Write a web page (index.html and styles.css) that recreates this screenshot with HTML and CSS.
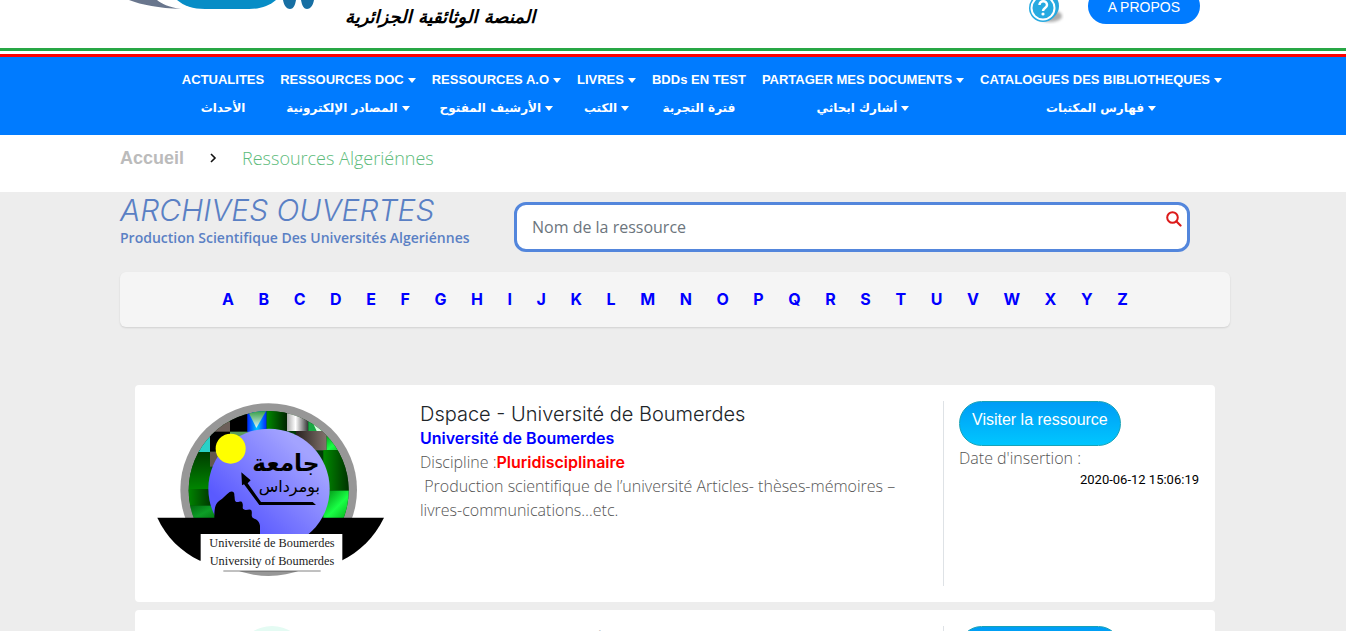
FILE: index.html
```html
<!DOCTYPE html>
<html lang="fr">
<head>
<meta charset="utf-8">
<meta name="viewport" content="width=device-width, initial-scale=1">
<title>Archives ouvertes</title>
<link rel="stylesheet" href="styles.css">
</head>
<body>
<header class="top">
  <div class="container top-row">
    <div class="brand">
      <svg class="brand-mark" width="205" height="40" viewBox="0 0 205 40" aria-hidden="true">
        <path d="M9 0h28c5 4 11 7 24 9C39 8 22 5 9 0z" fill="#69768d"/>
        <path d="M57 0h99c-7 6-16 9-27 9H85C73 9 64 6 57 0z" fill="#078dc6"/>
        <path d="M163 0h13c-1 6-3 9-6 9s-6-3-7-9zM181 0h13c-1 6-4 9-7 9s-5-3-6-9z" fill="#176fa3"/>
      </svg>
      <span class="brand-name" lang="ar" dir="rtl">المنصة الوثائقية الجزائرية</span>
    </div>
    <div class="top-actions">
      <a class="help" href="#" aria-label="Aide">
        <svg width="36" height="40" viewBox="0 0 36 40">
          <defs><filter id="soft" x="-30%" y="-30%" width="160%" height="160%"><feGaussianBlur stdDeviation="1.5"/></filter></defs>
          <ellipse cx="22" cy="32" rx="12" ry="6" fill="#888" opacity=".7" filter="url(#soft)"/>
          <circle cx="17" cy="22" r="14" fill="#2aa5dc"/>
          <circle cx="15" cy="24" r="14" fill="#27aae1"/>
          <circle cx="15" cy="24" r="11.500" fill="none" stroke="#fff" stroke-width="2"/>
          <path d="M11.500 21c0-5 7.500-5 7.500 0 0 3-4 3-4 6" fill="none" stroke="#fff" stroke-width="2.500"/>
          <circle cx="15" cy="30" r="1.600" fill="#fff"/>
        </svg>
      </a>
      <a class="about" href="#">A PROPOS</a>
    </div>
  </div>
</header>
<div class="flag"></div>
<nav class="menu">
  <ul class="container menu-list">
    <li><a href="#"><span>ACTUALITES</span><span class="ar" lang="ar">الأحداث</span></a></li>
    <li><a href="#"><span class="drop">RESSOURCES DOC</span><span class="ar drop"><bdi lang="ar">المصادر الإلكترونية</bdi></span></a></li>
    <li><a href="#"><span class="drop">RESSOURCES A.O</span><span class="ar drop"><bdi lang="ar">الأرشيف المفتوح</bdi></span></a></li>
    <li><a href="#"><span class="drop">LIVRES</span><span class="ar drop"><bdi lang="ar">الكتب</bdi></span></a></li>
    <li><a href="#"><span>BDDs EN TEST</span><span class="ar" lang="ar">فترة التجربة</span></a></li>
    <li><a href="#"><span class="drop">PARTAGER MES DOCUMENTS</span><span class="ar drop"><bdi lang="ar">أشارك ابحاثي</bdi></span></a></li>
    <li><a href="#"><span class="drop">CATALOGUES DES BIBLIOTHEQUES</span><span class="ar drop"><bdi lang="ar">فهارس المكتبات</bdi></span></a></li>
  </ul>
</nav>
<div class="container crumbs">
  <a class="crumb-home" href="#">Accueil</a>
  <svg width="8" height="10" viewBox="0 0 8 10" aria-hidden="true"><path d="M2 1l4 4-4 4" fill="none" stroke="#111" stroke-width="1.600"/></svg>
  <a class="crumb-page" href="#">Ressources Algeriénnes</a>
</div>
<main class="content">
  <div class="container">
    <div class="intro">
      <div>
        <h1>ARCHIVES OUVERTES</h1>
        <p class="subtitle">Production Scientifique Des Universités Algeriénnes</p>
      </div>
      <form class="search">
        <input type="text" aria-label="Nom de la ressource" placeholder="Nom de la ressource">
        <button type="button" aria-label="Rechercher">
          <svg width="16" height="16" viewBox="0 0 16 16"><circle cx="6.500" cy="6.500" r="5.300" fill="none" stroke="#dc1a1a" stroke-width="2"/><path d="M10.500 10.500l4 4" stroke="#dc1a1a" stroke-width="2.200" stroke-linecap="round"/></svg>
        </button>
      </form>
    </div>
    <nav class="letters" aria-label="Index alphabétique">
      <div class="letters-row">
        <a href="#">A</a><a href="#">B</a><a href="#">C</a><a href="#">D</a><a href="#">E</a><a href="#">F</a><a href="#">G</a><a href="#">H</a><a href="#">I</a><a href="#">J</a><a href="#">K</a><a href="#">L</a><a href="#">M</a><a href="#">N</a><a href="#">O</a><a href="#">P</a><a href="#">Q</a><a href="#">R</a><a href="#">S</a><a href="#">T</a><a href="#">U</a><a href="#">V</a><a href="#">W</a><a href="#">X</a><a href="#">Y</a><a href="#">Z</a>
      </div>
    </nav>
    <div class="cards">
      <article class="card">
        <div class="card-logo">
          <svg width="240" height="184" viewBox="0 18 720 552" role="img" aria-label="Université de Boumerdes">
            <defs>
              <linearGradient id="disc" x1="0" y1="1" x2="1" y2="0"><stop offset=".25" stop-color="#5a5aff"/><stop offset=".8" stop-color="#a3a3ff"/></linearGradient>
              <linearGradient id="g1" x1="0" y1="0" x2="1" y2="0"><stop offset="0" stop-color="#008a00"/><stop offset="1" stop-color="#002400"/></linearGradient>
              <linearGradient id="g2" x1="0" y1="0" x2="0" y2="1"><stop offset="0" stop-color="#003800"/><stop offset="1" stop-color="#008500"/></linearGradient>
              <linearGradient id="g3" x1="0" y1="0" x2="1" y2="1"><stop offset="0" stop-color="#008a10"/><stop offset=".5" stop-color="#19ff45"/><stop offset="1" stop-color="#009a10"/></linearGradient>
              <linearGradient id="w" x1="0" y1="0" x2="1" y2="0"><stop offset="0" stop-color="#aaa"/><stop offset=".4" stop-color="#fff"/><stop offset="1" stop-color="#333"/></linearGradient>
              <linearGradient id="b" x1="0" y1="0" x2="1" y2="0"><stop offset="0" stop-color="#0020ff"/><stop offset=".5" stop-color="#00c8ff"/><stop offset="1" stop-color="#0020ff"/></linearGradient>
              <linearGradient id="br" x1="0" y1="0" x2="1" y2="0"><stop offset="0" stop-color="#28221f"/><stop offset="1" stop-color="#82736d"/></linearGradient>
              <linearGradient id="tri" x1="0" y1="0" x2="0" y2="1"><stop offset="0" stop-color="#2c9a3a"/><stop offset="1" stop-color="#dff5ff"/></linearGradient>
              <clipPath id="inner"><ellipse cx="356" cy="286" rx="240" ry="238"/></clipPath>
            </defs>
            <ellipse cx="356" cy="284" rx="265" ry="259" fill="#979797"/>
            <g clip-path="url(#inner)">
              <rect x="110" y="40" width="500" height="500" fill="#003c08"/>
              <rect x="110" y="165" width="75" height="117" fill="url(#g2)"/>
              <rect x="110" y="282" width="90" height="50" fill="url(#g1)"/>
              <rect x="110" y="332" width="90" height="50" fill="url(#g3)" opacity=".5"/>
              <rect x="145" y="125" width="35" height="46" fill="#2ad0c8"/>
              <rect x="180" y="80" width="60" height="32" fill="#6c5f59"/>
              <rect x="180" y="110" width="60" height="60" fill="#000"/>
              <rect x="180" y="170" width="50" height="45" fill="#63574f"/>
              <rect x="240" y="45" width="52" height="66" fill="#000"/>
              <rect x="240" y="110" width="70" height="30" fill="#5b9c5b"/>
              <rect x="292" y="45" width="58" height="66" fill="url(#b)"/>
              <path d="M292 45h58l-31 54z" fill="url(#tri)"/>
              <rect x="350" y="45" width="61" height="66" fill="url(#g1)"/>
              <rect x="411" y="45" width="64" height="63" fill="url(#w)"/>
              <rect x="475" y="60" width="55" height="48" fill="#19a944"/>
              <path d="M475 55l55 53h-30z" fill="#d9ffe1"/>
              <rect x="438" y="108" width="92" height="58" fill="url(#br)"/>
              <rect x="530" y="108" width="75" height="58" fill="url(#g3)"/>
              <rect x="520" y="165" width="90" height="122" fill="url(#g1)"/>
              <rect x="520" y="287" width="90" height="90" fill="url(#g3)"/>
            </g>
            <path d="M22 368h680c-28 58-75 104-128 129H150C94 471 48 425 22 368z" fill="#000"/>
            <ellipse cx="357" cy="281" rx="182" ry="180" fill="url(#disc)"/>
            <circle cx="242" cy="161" r="45" fill="#ff0"/>
            <path d="M193 372c0-25 0-44 14-54 14-8 22-20 32-27 8-4 15 0 14 10 2 10 0 18 6 20 8 2 14-6 18 2 4 10-2 16 4 20 8 6 18-4 23 3 4 8-2 16 4 22 12 6 20 10 22 24v30H193z" fill="#000"/>
            <path d="M274 232l28 24-9 9 40 56h155l10 9H328l-46-62-6 3z" fill="#000"/>
            <text class="seal-big" x="408" y="228" text-anchor="middle">جامعة</text>
            <text class="seal-mid" x="418" y="292" text-anchor="middle">بومرداس</text>
            <path d="M152 417h425v80l-65 31H220l-68-30z" fill="#fff"/>
            <path d="M220 528h292" stroke="#444" stroke-width="2"/>
            <text class="seal-fr" x="366" y="456" text-anchor="middle">Université de Boumerdes</text>
            <text class="seal-fr" x="366" y="511" text-anchor="middle">University of Boumerdes</text>
          </svg>
        </div>
        <div class="card-text">
          <h2>Dspace - Université de Boumerdes</h2>
          <p class="owner">Université de Boumerdes</p>
          <p>Discipline :<strong>Pluridisciplinaire</strong></p>
          <p>&nbsp;Production scientifique de l’université Articles- thèses-mémoires – livres-communications…etc.</p>
        </div>
        <div class="card-side">
          <a class="visit" href="#">Visiter la ressource</a>
          <p>Date d'insertion :</p>
          <time>2020-06-12 15:06:19</time>
        </div>
      </article>
      <article class="card">
        <div class="card-logo">
          <svg width="240" height="184" viewBox="0 0 240 184" aria-hidden="true"><ellipse cx="122" cy="90" rx="56" ry="90" fill="#e4fbf3"/></svg>
        </div>
        <div class="card-text">
          <h2>Dspace - Université</h2>
        </div>
        <div class="card-side">
          <a class="visit" href="#" aria-label="Visiter la ressource"></a>
        </div>
      </article>
    </div>
  </div>
</main>
</body>
</html>
```
FILE: styles.css
```css
* { box-sizing: border-box; }
body {
  margin: 0;
  height: 100vh;
  overflow: hidden;
  background: #fff;
  color: #212529;
  font-family: "Open Sans", "DejaVu Sans", sans-serif;
  font-size: 16px;
  line-height: 24px;
}
a { color: inherit; text-decoration: none; }
h1, h2, p, ul { margin: 0; padding: 0; }

.container { width: 100%; max-width: 1140px; margin: 0 auto; padding: 0 13px 0 17px; }

.top { height: 48px; overflow: hidden; }
.top-row { height: 48px; display: flex; justify-content: space-between; align-items: flex-start; }
.brand { display: flex; align-items: flex-start; gap: 20px; }
.brand-name {
  padding-top: 4px;
  color: #000;
  font: italic bold 18px/26px "DejaVu Sans", sans-serif;
}
.top-actions { display: flex; align-items: flex-end; gap: 24px; height: 24px; padding-right: 30px; }
.help svg { display: block; }
.about {
  height: 36px;
  padding: 0 20px;
  border-radius: 18px;
  background: #007bff;
  color: #fff;
  font: 14px/38px "Liberation Sans", Arial, sans-serif;
}

.flag { height: 9px; background: linear-gradient(#28a745 0 3px, #fff 3px 6px, #f00 6px); }

.menu { background: #007bff; }
.menu-list { display: flex; justify-content: flex-end; list-style: none; padding-top: 9px; padding-bottom: 13px; }
.menu-list a {
  display: flex;
  flex-direction: column;
  align-items: center;
  padding: 0 8px;
  color: #fff;
  font: bold 13px/28px "Liberation Sans", "DejaVu Sans", sans-serif;
  white-space: nowrap;
}
.menu-list .ar { font-family: "DejaVu Sans", sans-serif; font-size: 12px; }
.drop::after {
  content: "";
  display: inline-block;
  margin-left: 4px;
  vertical-align: 1px;
  border: 4px solid transparent;
  border-top: 5px solid #fff;
  border-bottom: 0;
}

.crumbs { display: flex; align-items: center; gap: 25px; height: 57px; padding-bottom: 12px; font-size: 18px; }
.crumb-home { color: #bbb; font-family: "Liberation Sans", Arial, sans-serif; font-weight: bold; }
.crumb-page { color: #5dbb7b; font-weight: 300; }

.content { background: #ededed; padding-bottom: 24px; }
.intro { display: grid; grid-template-columns: 394px 1fr; height: 80px; padding-right: 40px; }
h1 { color: #5a80c4; font-family: Inter, sans-serif; font-size: 30px; line-height: 36px; font-style: italic; font-weight: 300; }
.subtitle { color: #5a80c4; font-size: 14px; line-height: 20px; font-weight: 600; white-space: nowrap; }
.search {
  display: flex;
  align-items: flex-start;
  height: 50px;
  margin-top: 10px;
  border: 3px solid #5386dc;
  border-radius: 12px;
  background: #fff;
}
.search input {
  flex: 1;
  height: 44px;
  border: 0;
  padding: 0 15px;
  background: none;
  outline: none;
  font: 16px "Open Sans", sans-serif;
}
.search input::placeholder { color: #6c757d; opacity: 1; }
.search button { padding: 6px 5px; border: 0; background: none; line-height: 0; }

.letters { padding: 15px 16px 16px; border-radius: 6px; background: #f5f5f5; box-shadow: 0 1px 2px rgba(0, 0, 0, .12); }
.letters-row {
  display: flex;
  justify-content: space-between;
  max-width: 906px;
  margin: 0 auto;
  color: #00f;
  font-family: Inter, sans-serif;
  font-weight: 700;
}

.cards { display: grid; gap: 8px; padding: 58px 15px 0; }
.card {
  display: grid;
  grid-template-columns: 285px 1fr 272px;
  padding: 16px 0;
  border-radius: 4px;
  background: #fff;
}
.card-logo { padding-left: 15px; }
.card-logo svg { display: block; }
.seal-big { font: bold 70px "DejaVu Sans", sans-serif; }
.seal-mid { font: 48px "DejaVu Sans", sans-serif; }
.seal-fr { font: 37px "Liberation Serif", serif; fill: #222; }
.card-text { padding-right: 30px; color: #555; font-weight: 300; }
.card-text h2 { padding-top: 1px; color: #212529; font-family: Inter, sans-serif; font-size: 20px; line-height: 24px; font-weight: 300; }
.card-text .owner, .card-text strong { font-family: Inter, sans-serif; font-weight: 600; }
.card-text .owner { color: #00f; }
.card-text strong { color: #f00; }
.card-side { min-height: 185px; padding: 0 16px 0 15px; border-left: 1px solid #dee2e6; color: #555; font-weight: 300; }
.visit {
  display: inline-block;
  min-width: 162px;
  height: 45px;
  padding: 6px 12px;
  border: 1px solid #17a2b8;
  border-radius: 23px;
  background: linear-gradient(#009cf5, #00c6ff);
  color: #fff;
  font: 16px/24px "Liberation Sans", Arial, sans-serif;
  vertical-align: top;
}
.card-side time { display: block; color: #000; font: 13px/20px Roboto, sans-serif; text-align: right; }
```
